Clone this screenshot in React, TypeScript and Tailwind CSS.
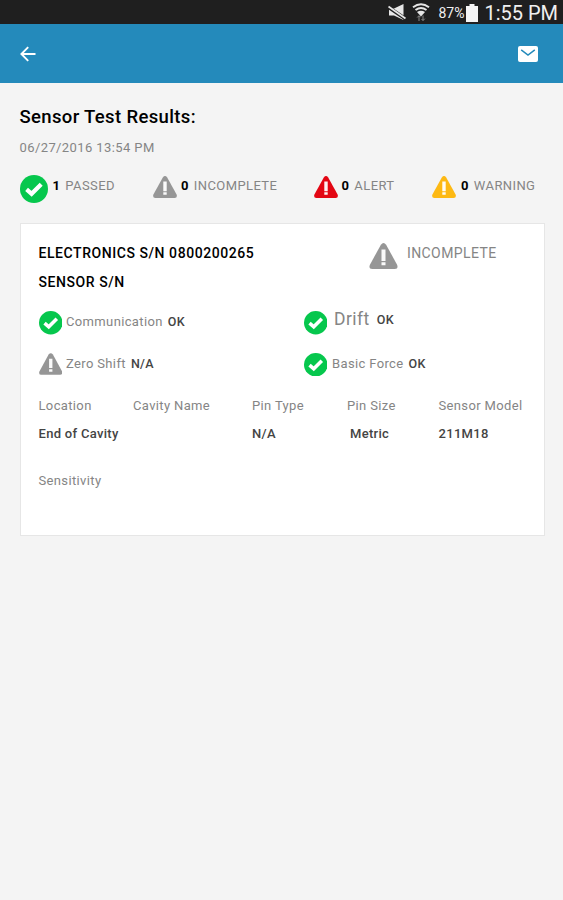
import { ReactNode } from "react";

type IconProps = {
  className?: string;
};

type StatProps = {
  icon: ReactNode;
  count: number;
  label: string;
};

type CheckResultProps = {
  icon: ReactNode;
  label: string;
  value: string;
  className?: string;
  labelClassName?: string;
  valueClassName?: string;
};

const columns = [
  { label: "Location", value: "End of Cavity" },
  { label: "Cavity Name", value: "" },
  { label: "Pin Type", value: "N/A" },
  { label: "Pin Size", value: "Metric", valueClassName: "pl-[3px]" },
  { label: "Sensor Model", value: "211M18" },
];

function PassedIcon({ className }: IconProps) {
  return (
    <svg viewBox="0 0 28 28" className={className}>
      <circle cx="14" cy="14" r="14" fill="#06c74d" />
      <path
        d="M6.600 14.400l5 4.400L21.200 9.200"
        fill="none"
        stroke="#fff"
        strokeWidth="4.200"
      />
    </svg>
  );
}

function WarningIcon({ className }: IconProps) {
  return (
    <svg viewBox="0 0 24 22" className={className}>
      <path
        d="M9.800 1.400Q12-1.400 14.200 1.400L23.600 18.600Q24.600 22 21.600 22H2.400Q-.6 22 .4 18.600Z"
        fill="currentColor"
      />
      <path
        d="M10.300 5.600h3.400v9.600h-3.400zM10.300 16.300h3.400v2.500h-3.400z"
        fill="#fff"
        fillOpacity="0.95"
      />
    </svg>
  );
}

function Stat({ icon, count, label }: StatProps) {
  return (
    <div className="flex">
      {icon}
      <p className="leading-5 text-[13px] tracking-[0.4px] text-[#858585] whitespace-nowrap">
        <span className="font-bold text-black mr-[5px]">{count}</span>
        {label}
      </p>
    </div>
  );
}

function CheckResult({
  icon,
  label,
  value,
  className = "",
  labelClassName = "text-[13px] tracking-[0.36px]",
  valueClassName = "ml-[5px]",
}: CheckResultProps) {
  return (
    <div className={`flex ${className}`}>
      {icon}
      <p className="leading-5 text-[#858585] whitespace-nowrap">
        <span className={labelClassName}>{label}</span>
        <span
          className={`text-[12.5px] tracking-[0.3px] font-medium text-[#444] ${valueClassName}`}
        >
          {value}
        </span>
      </p>
    </div>
  );
}

function StatusBar() {
  return (
    <div className="h-6 bg-[#1f1f1f] flex items-center justify-end pr-[5px] text-[#f0f0f0]">
      <svg viewBox="0 0 18 16" className="w-[18px] h-4 mr-[6px]">
        <path d="M1 4.500h5L15.500 0v16L6 11.500H1z" fill="#e6e6e6" />
        <path d="M0 3l17 11.500" stroke="#1f1f1f" strokeWidth="3.500" />
        <path d="M.5 2.500l17 12" stroke="#e6e6e6" strokeWidth="1.800" />
      </svg>
      <svg viewBox="0 0 18 18" className="w-[18px] h-[18px] mr-[8px]">
        <g fill="none" stroke="#e6e6e6" strokeWidth="2">
          <path d="M1 4.200Q9-1.500 17 4.200" />
          <path d="M3.500 7Q9 3 14.500 7" />
        </g>
        <path d="M5 9Q9 6.500 13 9L9 13.500z" fill="#e6e6e6" />
        <path
          d="M7 18v-5M5.200 14.500L7 12.700l1.500 1.500M11 12.500v5M9.500 16L11 17.500l1.800-1.800"
          fill="none"
          stroke="#8a8a8a"
        />
      </svg>
      <span className="text-[14px] leading-6 pt-[2px]">87%</span>
      <svg viewBox="0 0 12 18" className="w-3 h-[18px] ml-[2px] mr-[6px] mt-px">
        <path d="M3.500 0h5v2H12v16H0V2h3.500z" fill="#f5f5f5" />
      </svg>
      <span className="text-[20px] leading-6 pt-px">1:55 PM</span>
    </div>
  );
}

function AppBar() {
  return (
    <header className="h-[59px] bg-[#248abb] flex items-center justify-between pl-[19.5px] pr-[25px]">
      <button type="button" aria-label="Back">
        <svg viewBox="0 0 16 16" className="w-4 h-4">
          <path
            d="M15.500 8H1.500M8.200 1.200L1.400 8l6.800 6.800"
            fill="none"
            stroke="#fff"
            strokeWidth="1.900"
          />
        </svg>
      </button>
      <button type="button" aria-label="Email">
        <svg viewBox="0 0 20 16" className="w-5 h-4">
          <rect width="20" height="16" rx="2" fill="#fff" />
          <path
            d="M3.200 3.800L10 9l6.800-5.200"
            fill="none"
            stroke="#248abb"
            strokeWidth="1.500"
          />
        </svg>
      </button>
    </header>
  );
}

export default function App() {
  return (
    <div className="min-h-screen bg-[#f4f4f4] font-['Roboto',sans-serif]">
      <StatusBar />
      <AppBar />

      <main className="pl-[19.5px] pr-[18.5px] pt-[22px]">
        <h1 className="text-[18.5px] leading-6 tracking-[0.35px] font-medium text-black">
          Sensor Test Results:
        </h1>
        <p className="mt-[9px] text-[13px] leading-5 tracking-[0.4px] text-[#858585]">
          06/27/2016 13:54 PM
        </p>

        <div className="mt-[18px] h-[47px] grid grid-cols-[133.5px_160.5px_118.5px_auto] items-start">
          <Stat
            icon={<PassedIcon className="w-7 h-7 mr-[5px] mt-[-1px]" />}
            count={1}
            label="PASSED"
          />
          <Stat
            icon={
              <WarningIcon className="w-6 h-[22px] mr-1 text-[#969696]" />
            }
            count={0}
            label="INCOMPLETE"
          />
          <Stat
            icon={
              <WarningIcon className="w-6 h-[22px] mr-1 text-[#e30613]" />
            }
            count={0}
            label="ALERT"
          />
          <Stat
            icon={
              <WarningIcon className="w-6 h-[22px] mr-[5px] text-[#fdb913]" />
            }
            count={0}
            label="WARNING"
          />
        </div>

        <section className="h-[313px] bg-white border border-[#e6e6e6] pl-[18px] pt-[19px]">
          <div className="grid grid-cols-[330.5px_auto]">
            <div className="text-[14px] leading-5 tracking-[0.56px] font-medium text-black">
              <h2>ELECTRONICS S/N 0800200265</h2>
              <h2 className="mt-[9px]">SENSOR S/N</h2>
            </div>
            <div className="flex">
              <WarningIcon className="w-[29px] h-[26px] mr-[9px] text-[#969696]" />
              <span className="text-[14px] leading-5 tracking-[0.4px] text-[#858585]">
                INCOMPLETE
              </span>
            </div>
          </div>

          <div className="mt-[19px] grid grid-cols-[265px_auto] gap-y-[18px]">
            <CheckResult
              icon={<PassedIcon className="w-[23.5px] h-[23.5px] mr-1" />}
              label="Communication"
              value="OK"
            />
            <CheckResult
              icon={<PassedIcon className="w-[23.5px] h-[23.5px] mr-[7px]" />}
              label="Drift"
              value="OK"
              labelClassName="inline-block -translate-y-[2px] text-[17.5px] tracking-[0.45px]"
              valueClassName="inline-block -translate-y-[3px] ml-[7px]"
            />
            <CheckResult
              icon={
                <WarningIcon className="w-[23.5px] h-[22px] mr-1 text-[#969696]" />
              }
              label="Zero Shift"
              value="N/A"
            />
            <CheckResult
              icon={<PassedIcon className="w-[23.5px] h-[23.5px] mr-[5px]" />}
              label="Basic Force"
              value="OK"
            />
          </div>

          <div className="mt-[19.5px] grid grid-cols-[94.5px_119px_95px_91.5px_auto]">
            {columns.map((column) => (
              <div key={column.label} className="whitespace-nowrap">
                <p className="text-[13px] leading-5 tracking-[0.36px] text-[#858585]">
                  {column.label}
                </p>
                <p
                  className={`mt-2 text-[13px] leading-5 tracking-[0.3px] font-medium text-[#444] ${column.valueClassName || ""}`}
                >
                  {column.value}
                </p>
              </div>
            ))}
          </div>

          <p className="mt-[27px] text-[13px] leading-5 tracking-[0.36px] text-[#858585]">
            Sensitivity
          </p>
        </section>
      </main>
    </div>
  );
}
